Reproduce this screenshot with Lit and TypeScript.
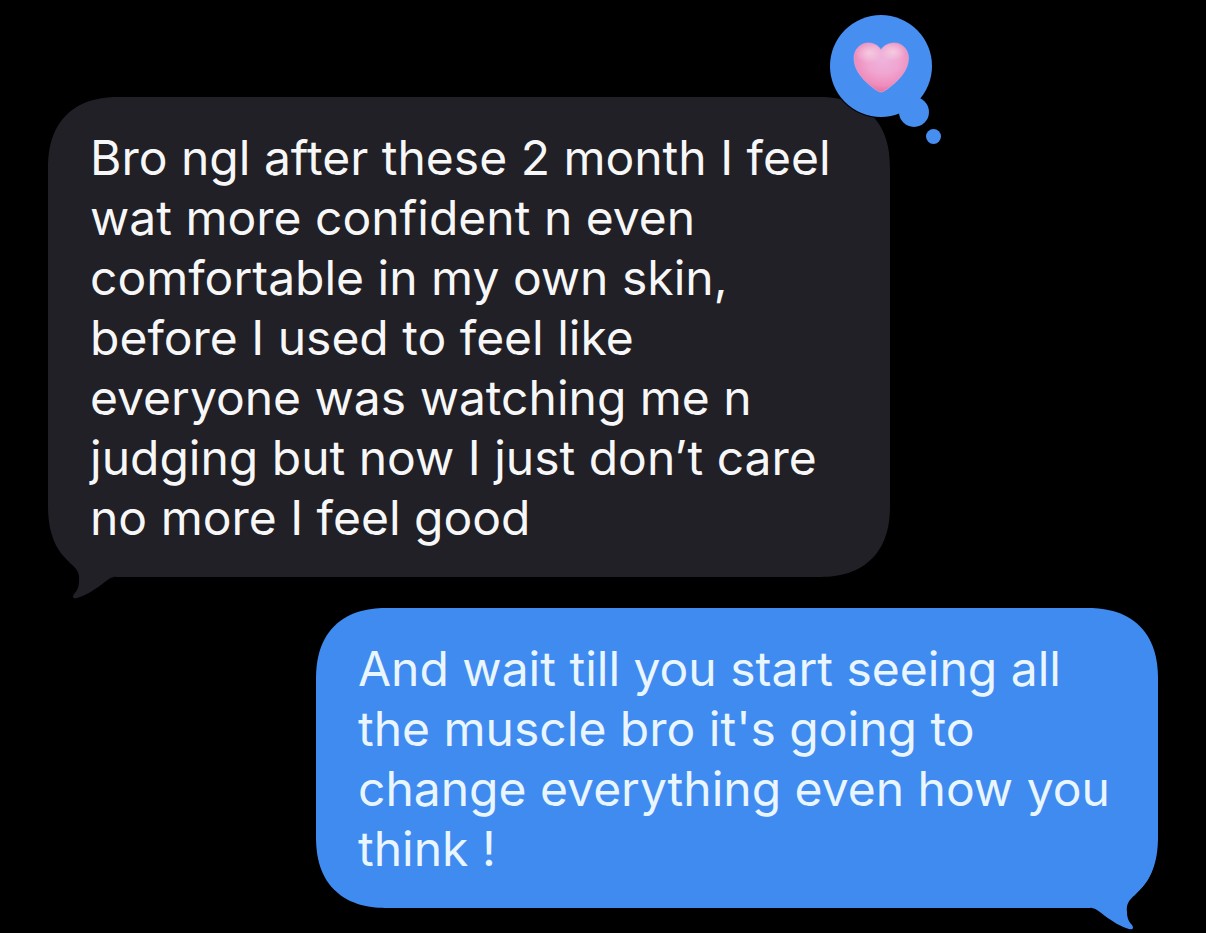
import { LitElement, html, css, svg } from "lit";
import { customElement, property } from "lit/decorators.js";

@customElement("heart-tapback")
export class HeartTapback extends LitElement {
  static styles = css`
    :host { display: block; }
    svg { display: block; }
  `;

  render() {
    return html`
      <svg width="114" height="132" viewBox="0 0 114 132" role="img" aria-label="Loved">
        <defs>
          <radialGradient id="body" cx="0.54" cy="0.34" r="0.66">
            <stop offset="0" stop-color="#eeb4dc" />
            <stop offset="0.45" stop-color="#f0a5d0" />
            <stop offset="0.8" stop-color="#ee8cbc" />
            <stop offset="1" stop-color="#e8709f" />
          </radialGradient>
          <radialGradient id="shine" cx="0.5" cy="0.5" r="0.5">
            <stop offset="0" stop-color="#f6d6e6" stop-opacity="0.75" />
            <stop offset="1" stop-color="#f6d6e6" stop-opacity="0" />
          </radialGradient>
        </defs>
        <circle cx="52" cy="52" r="52" fill="#000" />
        <g fill="#468ff0">
          <circle cx="52" cy="52" r="51" />
          <circle cx="85" cy="98" r="15" />
          <circle cx="104.500" cy="122.500" r="7.500" />
        </g>
        <path d="M52 36C49 31 44.500 29 39 29C31 29 25 36 25 44C25 57 35 67 45 74.500C49 77.300 50.500 78 52 78C53.500 78 55 77.300 59 74.500C69 67 79.500 57 79.500 44C79.500 36 73.500 29 65.500 29C60 29 55 31 52 36Z"
          fill="url(#body)" stroke="#f2a3cc" stroke-width="0.600" />
        <ellipse cx="40" cy="39" rx="14" ry="10" fill="url(#shine)" />
        <ellipse cx="64" cy="38" rx="13" ry="9" fill="url(#shine)" />
      </svg>
    `;
  }
}

@customElement("message-bubble")
export class MessageBubble extends LitElement {
  @property({ type: Array }) lines: string[] = [];
  @property({ type: Boolean, reflect: true }) sent = false;
  @property({ type: Boolean }) loved = false;

  static styles = css`
    :host {
      --fill: #212026;
      --ink: #f7f7f8;
      display: block;
      position: relative;
      box-sizing: border-box;
      width: 76%;
      max-width: 842px;
      padding: 31px 42px 29px;
      border-radius: 72px;
      corner-shape: superellipse(1.25);
      background: var(--fill);
      color: var(--ink);
      align-self: flex-start;
    }
    :host([sent]) {
      --fill: #3f8bf0;
      --ink: #e9f6ff;
      align-self: flex-end;
    }
    .text {
      margin: 0;
      font-size: 48px;
      line-height: 60px;
    }
    .tail {
      position: absolute;
      bottom: -22px;
      left: 0;
      display: block;
      fill: var(--fill);
    }
    :host([sent]) .tail {
      left: auto;
      right: 0;
      transform: scaleX(-1);
    }
    .tapback {
      position: absolute;
      top: -83px;
      right: -53px;
    }
  `;

  render() {
    return html`
      <p class="text">
        ${this.lines.map((line, i) => (i ? html`<br />${line}` : line))}
      </p>
      <svg class="tail" width="72" height="72" viewBox="0 0 72 72" aria-hidden="true">
        ${svg`<path d="M4 6C7 19 13 27 23 37C29 42 32 46 31 54C31 60 29 64 26 67C24 70 25 72 29 71C37 69 46 63 53 58C58 54 61 51 66 50L66 32L30 18Z" />`}
      </svg>
      ${this.loved ? html`<heart-tapback class="tapback"></heart-tapback>` : null}
    `;
  }
}

@customElement("app-root")
export class AppRoot extends LitElement {
  static styles = css`
    :host {
      display: block;
      box-sizing: border-box;
      min-height: 100vh;
      padding: 97px 48px 25px;
      background: #000;
      font-family: Inter, "Liberation Sans", sans-serif;
    }
    .thread {
      display: flex;
      flex-direction: column;
      gap: 31px;
    }
  `;

  private received = [
    "Bro ngl after these 2 month I feel",
    "wat more confident n even",
    "comfortable in my own skin,",
    "before I used to feel like",
    "everyone was watching me n",
    "judging but now I just don’t care",
    "no more I feel good",
  ];

  private reply = [
    "And wait till you start seeing all",
    "the muscle bro it's going to",
    "change everything even how you",
    "think !",
  ];

  render() {
    return html`
      <main class="thread">
        <message-bubble .lines=${this.received} loved></message-bubble>
        <message-bubble .lines=${this.reply} sent></message-bubble>
      </main>
    `;
  }
}
